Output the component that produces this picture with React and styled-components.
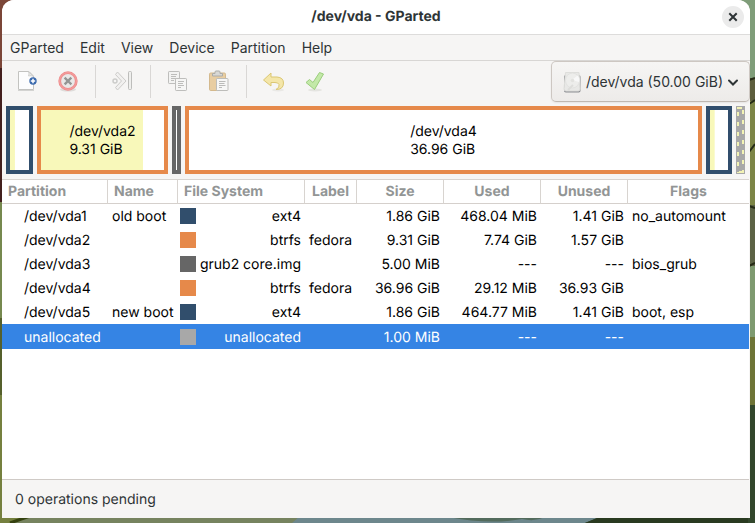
import React from "react";
import styled, { createGlobalStyle } from "styled-components";

const GlobalStyle = createGlobalStyle`
  *, *::before, *::after { box-sizing: border-box; }
  html, body { margin: 0; padding: 0; }
  body {
    font-family: Inter, "Noto Sans", "Liberation Sans", sans-serif;
    font-size: 14px;
    line-height: 18px;
    color: #2e3436;
    text-rendering: geometricPrecision;
  }
  button { font: inherit; color: inherit; }
`;

const Desktop = styled.div`
  position: relative;
  display: flex;
  min-height: 100vh;
  padding: 0 5px 5px 2px;
  overflow: hidden;
`;

const WallpaperSvg = styled.svg`
  position: absolute;
  inset: 0;
  width: 100%;
  height: 100%;
`;

const Window = styled.main`
  position: relative;
  display: flex;
  flex: 1;
  flex-direction: column;
  min-width: 0;
  overflow: hidden;
  background: #f6f5f4;
  border-radius: 12px 12px 0 0;
`;

const TitleBar = styled.header`
  display: grid;
  grid-template-columns: 1fr auto 1fr;
  align-items: center;
  height: 35px;
  padding: 0 6px 1px;
  background: #fff;
  border-bottom: 1px solid #dddcdb;
`;

const Title = styled.h1`
  grid-column: 2;
  margin: 0;
  font-size: 14px;
  font-weight: 700;
  line-height: 18px;
`;

const CloseButton = styled.button`
  display: grid;
  place-items: center;
  justify-self: end;
  width: 22px;
  height: 22px;
  padding: 0;
  border: 0;
  border-radius: 50%;
  background: #ebebeb;
`;

const MenuBar = styled.nav`
  display: flex;
  align-items: center;
  height: 26px;
  border-bottom: 1px solid #d8d6d4;
`;

const MenuButton = styled.button`
  padding: 0 8px;
  border: 0;
  background: none;
  line-height: 24px;
`;

const Toolbar = styled.div`
  display: flex;
  align-items: center;
  height: 41px;
  padding-left: 4px;
`;

const ToolButton = styled.button`
  display: grid;
  place-items: center;
  width: 41px;
  height: 38px;
  padding: 0 0 2px;
  border: 0;
  background: none;
`;

const Separator = styled.span`
  width: 14px;
  height: 33px;
  background: linear-gradient(#d9d7d5, #d9d7d5) center / 1px 100% no-repeat;
`;

const DeviceButton = styled.button`
  display: flex;
  align-items: center;
  gap: 4px;
  height: 41px;
  margin-left: auto;
  padding: 0 10px;
  border: 1px solid #cdc7c2;
  border-bottom-color: #bfb8b1;
  border-radius: 5px;
  background: linear-gradient(#f6f5f4, #edebe9);
  box-shadow: 0 1px 2px rgba(0, 0, 0, 0.07);
  white-space: nowrap;
`;

const DiskMap = styled.section`
  display: flex;
  gap: 4px;
  height: 77px;
  padding: 4px 5px 5px 4px;
`;

const DiskBlock = styled.div`
  display: grid;
  flex: ${(p) => p.$grow} 1 8px;
  place-items: center;
  min-width: 9px;
  border: 4px solid ${(p) => p.$color};
  background: linear-gradient(#f8f8ba, #f8f8ba) left / ${(p) => p.$used} 100% no-repeat #fff;
  color: #000;
  white-space: nowrap;
`;

const BlockText = styled.div`
  padding-top: 2px;
`;

const FreeBlock = styled.div`
  flex: 1 1 8px;
  min-width: 9px;
  padding: 1px;
  background: #a8a8a8;
`;

const FreeOutline = styled.div`
  height: 100%;
  background:
    linear-gradient(#f3f3b5, #f3f3b5) left top / 5px 2px no-repeat,
    linear-gradient(#f3f3b5, #f3f3b5) right bottom / 5px 2px no-repeat,
    repeating-linear-gradient(transparent 0 5px, #f3f3b5 5px 9px, transparent 9px 10px) left / 2px 100% no-repeat,
    repeating-linear-gradient(transparent 0 3px, #f3f3b5 3px 7px, transparent 7px 10px) right / 2px 100% no-repeat;
`;

const TablePane = styled.section`
  flex: 1;
  min-height: 0;
  margin-right: 1px;
  border-top: 1px solid #d8d4d0;
  border-bottom: 1px solid #cfcac6;
  background: #fff;
`;

const Table = styled.table`
  width: 100%;
  table-layout: fixed;
  border-collapse: separate;
  border-spacing: 0;
  color: #000;
`;

const Col = styled.col`
  width: ${(p) => p.$width};
`;

const HeadCell = styled.th`
  height: 24px;
  padding: 0 6px;
  border-bottom: 1px solid #d5d0cc;
  border-right: 1px solid #d8d4d0;
  color: #929595;
  font-weight: 700;
  text-align: ${(p) => p.$align};
  &:last-child { border-right: 0; }
`;

const Row = styled.tr`
  height: 24px;
  ${(p) =>
    p.$selected &&
    `
    height: 25px;
    background: #3584e4;
    color: #fff;
  `}
`;

const Cell = styled.td`
  padding: 2px 4px 0;
  padding-left: ${(p) => (p.$indent ? "22px" : "4px")};
  text-align: ${(p) => p.$align || "left"};
  white-space: nowrap;
`;

const FsCell = styled.td`
  padding: 0 4px 0 2px;
`;

const FsContent = styled.div`
  display: flex;
  align-items: center;
  justify-content: space-between;
  white-space: nowrap;
`;

const FsName = styled.span`
  padding-top: 2px;
`;

const Swatch = styled.span`
  flex: none;
  width: 16px;
  height: 16px;
  background: ${(p) => p.$color};
`;

const StatusBar = styled.footer`
  display: flex;
  align-items: center;
  height: 38px;
  padding: 2px 13px 0;
`;

const NAVY = "#314e6c";
const ORANGE = "#e6894a";
const GREY = "#666666";
const LIGHT = "#a8a8a8";

const menus = ["GParted", "Edit", "View", "Device", "Partition", "Help"];

const blocks = [
  { grow: 19, color: NAVY, used: "26%" },
  { grow: 123, color: ORANGE, used: "83%", name: "/dev/vda2", size: "9.31 GiB" },
  { grow: 1, color: GREY, used: "0%" },
  { grow: 509, color: ORANGE, used: "0%", name: "/dev/vda4", size: "36.96 GiB" },
  { grow: 18, color: NAVY, used: "26%" },
];

const columns = [
  { title: "Partition", width: "106px", align: "left" },
  { title: "Name", width: "70px", align: "left" },
  { title: "File System", width: "127px", align: "left" },
  { title: "Label", width: "52px", align: "center" },
  { title: "Size", width: "87px", align: "center" },
  { title: "Used", width: "97px", align: "center" },
  { title: "Unused", width: "87px", align: "center" },
  { title: "Flags", width: "auto", align: "center" },
];

const rows = [
  { part: "/dev/vda1", name: "old boot", color: NAVY, fs: "ext4", label: "", size: "1.86 GiB", used: "468.04 MiB", unused: "1.41 GiB", flags: "no_automount" },
  { part: "/dev/vda2", name: "", color: ORANGE, fs: "btrfs", label: "fedora", size: "9.31 GiB", used: "7.74 GiB", unused: "1.57 GiB", flags: "" },
  { part: "/dev/vda3", name: "", color: GREY, fs: "grub2 core.img", label: "", size: "5.00 MiB", used: "---", unused: "---", flags: "bios_grub" },
  { part: "/dev/vda4", name: "", color: ORANGE, fs: "btrfs", label: "fedora", size: "36.96 GiB", used: "29.12 MiB", unused: "36.93 GiB", flags: "" },
  { part: "/dev/vda5", name: "new boot", color: NAVY, fs: "ext4", label: "", size: "1.86 GiB", used: "464.77 MiB", unused: "1.41 GiB", flags: "boot, esp" },
  { part: "unallocated", name: "", color: LIGHT, fs: "unallocated", label: "", size: "1.00 MiB", used: "---", unused: "---", flags: "", selected: true },
];

function Wallpaper() {
  return (
    <WallpaperSvg viewBox="0 0 755 523" preserveAspectRatio="none" aria-hidden="true">
      <rect width="755" height="523" fill="#75803f" />
      <path d="M0 0H20V60L0 78Z" fill="#7b4638" />
      <path d="M0 68H4V202H0Z" fill="#43201e" />
      <path d="M0 202H4V318H0Z" fill="#76894f" />
      <path d="M0 318H4V395H0Z" fill="#55602c" />
      <path d="M730 0H755V78H730Z" fill="#7f9d79" />
      <path d="M748 78H755V101H748Z" fill="#5c5d3c" />
      <path d="M748 101H755V205H748Z" fill="#7c8546" />
      <path d="M748 205H755V266H748Z" fill="#5c6345" />
      <path d="M748 266H755V337H748Z" fill="#7e9a70" />
      <path d="M748 337H755V405H748Z" fill="#6e7436" />
      <path d="M749 80L755 78M749 104L755 100M749 152L755 144M749 206L755 208M749 266L755 263" stroke="#252b16" strokeWidth="2" />
      <path d="M748 405H755V523H580L600 514H748Z" fill="#32472c" />
      <path d="M25 516H310L295 523H10Z" fill="#76835f" />
      <path d="M10 523L30 516" stroke="#34410f" strokeWidth="3" />
      <path d="M300 516H602L585 523H292Z" fill="#6d878c" />
      <path d="M448 517H545Q535 522 522 519Q490 525 448 517Z" fill="#536b5c" />
      <path d="M602 516H748V523H585Z" fill="#293a20" />
    </WallpaperSvg>
  );
}

function NewIcon() {
  return (
    <svg width="24" height="24" viewBox="0 0 24 24">
      <path d="M3 21.5H19" stroke="#d3d3d1" strokeWidth="1" />
      <path d="M3.5 2.5H14L18.500 7V20.500H3.500Z" fill="#fdfdfd" stroke="#c3c3c0" />
      <path d="M13.500 2.500Q14.500 5 13.500 7Q16 6 18.500 7.500Z" fill="#e8e8e6" stroke="#c9c9c6" strokeWidth=".8" />
      <circle cx="18" cy="12" r="3.700" fill="#3a69ad" />
      <path d="M15.800 12H20.200M18 9.800V14.200" stroke="#fff" strokeWidth="1.500" />
    </svg>
  );
}

function DeleteIcon() {
  return (
    <svg width="24" height="24" viewBox="0 0 24 24">
      <ellipse cx="12" cy="20.500" rx="8" ry="2" fill="#dedcda" />
      <circle cx="12" cy="12" r="8.300" fill="#e9e8e7" stroke="#ee8d8d" strokeWidth="2.800" />
      <circle cx="12" cy="12" r="8.400" fill="none" stroke="#f5a0a0" strokeWidth="1" />
      <path d="M9.500 9.500L14.500 14.500M14.500 9.500L9.500 14.500" stroke="#939594" strokeWidth="2.400" strokeLinecap="square" />
    </svg>
  );
}

function ResizeIcon() {
  return (
    <svg width="24" height="24" viewBox="0 0 24 24" fill="none">
      <circle cx="4" cy="12" r="2" stroke="#ccccca" strokeWidth="1.500" />
      <path d="M4.500 5.500L6.500 3L15 12L6.500 21L4.500 18.500L10.500 12Z" fill="#f1f0ef" stroke="#cccbc9" strokeLinejoin="round" />
      <rect x="17.500" y="2.500" width="3" height="18" rx="1" fill="#efefed" stroke="#bdbdbb" />
    </svg>
  );
}

function CopyIcon() {
  return (
    <svg width="24" height="24" viewBox="0 0 24 24">
      <rect x="2.500" y="2.500" width="11" height="12" rx=".7" fill="#f3f3f2" stroke="#bebebc" />
      <path d="M5 5.500H11M5 7.500H10M5 9.500H11M5 11.500H8" stroke="#bdbdbb" />
      <rect x="9.500" y="9.500" width="11" height="12" rx=".7" fill="#f6f6f5" stroke="#bebebc" />
      <path d="M12 12.500H18M12 14.500H17M12 16.500H18M12 18.500H15" stroke="#bdbdbb" />
    </svg>
  );
}

function PasteIcon() {
  return (
    <svg width="24" height="24" viewBox="0 0 24 24">
      <rect x="2.500" y="4" width="16" height="17.500" rx="1.200" fill="#e8cda1" stroke="#d4b98d" />
      <path d="M5.500 7V4.500H8V3Q8 2 9 2H12Q13 2 13 3V4.500H15.500V7Z" fill="#d8d8d5" stroke="#acaca8" />
      <rect x="9.500" y="9.500" width="11.500" height="12" rx=".7" fill="#f7f7f6" stroke="#bdbdba" />
      <path d="M12 12.500H18.500M12 14.500H17.500M12 16.500H18.500M12 18.500H15" stroke="#bbbbb9" />
    </svg>
  );
}

function UndoIcon() {
  return (
    <svg width="24" height="24" viewBox="0 0 24 24">
      <ellipse cx="16" cy="21" rx="6" ry="1.500" fill="#e9e8e5" />
      <path d="M1.500 11L9 4V8H15Q21.500 8.500 21.500 14Q21.500 20.500 14 20.500Q18 18.500 17 15.500Q16.300 13.500 13 13.500H9V17Z" fill="#f4e6a9" stroke="#dbc773" strokeLinejoin="round" />
    </svg>
  );
}

function ApplyIcon() {
  return (
    <svg width="24" height="24" viewBox="0 0 24 24">
      <ellipse cx="12" cy="21" rx="7" ry="1.500" fill="#e4e4e0" />
      <path d="M3 13.500L6.500 10.500L10 13.500L16.500 3.500L20.500 5L11.500 20.500Z" fill="#c3e9a8" stroke="#9bcd7c" strokeLinejoin="round" />
    </svg>
  );
}

function DriveIcon() {
  return (
    <svg width="20" height="24" viewBox="0 0 20 24">
      <rect x="2" y="5" width="16.500" height="17.500" rx="1.800" fill="#8b8d91" />
      <path d="M3.500 2.500H17L18 19Q18 21 16.500 21H4Q2 21 2 19Z" fill="#e8e8e6" stroke="#dededb" />
      <ellipse cx="10.500" cy="10.500" rx="7" ry="7.500" fill="#ededeb" stroke="#e2e2e0" />
      <path d="M10 10L15.500 5.500Q18 8 17 12Z" fill="#f8f8f8" />
      <circle cx="10.500" cy="10.500" r="1.800" fill="#e2e2df" />
      <path d="M6 20L11 15" stroke="#dddddb" strokeWidth="2" />
    </svg>
  );
}

export default function App() {
  return (
    <>
      <GlobalStyle />
      <Desktop>
        <Wallpaper />
        <Window>
          <TitleBar>
            <Title>/dev/vda - GParted</Title>
            <CloseButton aria-label="Close">
              <svg width="10" height="10" viewBox="0 0 10 10">
                <path d="M2 2L8 8M8 2L2 8" stroke="#2e3436" strokeWidth="2" strokeLinecap="square" />
              </svg>
            </CloseButton>
          </TitleBar>
          <MenuBar aria-label="Main menu">
            {menus.map((m) => (
              <MenuButton key={m}>{m}</MenuButton>
            ))}
          </MenuBar>
          <Toolbar>
            <ToolButton aria-label="New" disabled><NewIcon /></ToolButton>
            <ToolButton aria-label="Delete" disabled><DeleteIcon /></ToolButton>
            <Separator />
            <ToolButton aria-label="Resize/Move" disabled><ResizeIcon /></ToolButton>
            <Separator />
            <ToolButton aria-label="Copy" disabled><CopyIcon /></ToolButton>
            <ToolButton aria-label="Paste" disabled><PasteIcon /></ToolButton>
            <Separator />
            <ToolButton aria-label="Undo" disabled><UndoIcon /></ToolButton>
            <ToolButton aria-label="Apply" disabled><ApplyIcon /></ToolButton>
            <DeviceButton aria-haspopup="listbox">
              <DriveIcon />
              /dev/vda (50.00 GiB)
              <svg width="12" height="12" viewBox="0 0 12 12" fill="none">
                <path d="M2 4.500L6 8.500L10 4.500" stroke="#2e3436" strokeWidth="2" strokeLinecap="round" />
              </svg>
            </DeviceButton>
          </Toolbar>
          <DiskMap aria-label="Disk layout">
            {blocks.map((b, i) => (
              <DiskBlock key={i} $grow={b.grow} $color={b.color} $used={b.used}>
                {b.name && (
                  <BlockText>
                    {b.name}
                    <br />
                    {b.size}
                  </BlockText>
                )}
              </DiskBlock>
            ))}
            <FreeBlock><FreeOutline /></FreeBlock>
          </DiskMap>
          <TablePane>
            <Table>
              <colgroup>
                {columns.map((c) => (
                  <Col key={c.title} $width={c.width} />
                ))}
              </colgroup>
              <thead>
                <tr>
                  {columns.map((c) => (
                    <HeadCell key={c.title} scope="col" $align={c.align}>{c.title}</HeadCell>
                  ))}
                </tr>
              </thead>
              <tbody>
                {rows.map((r) => (
                  <Row key={r.part} $selected={r.selected} aria-selected={!!r.selected}>
                    <Cell $indent>{r.part}</Cell>
                    <Cell>{r.name}</Cell>
                    <FsCell>
                      <FsContent>
                        <Swatch $color={r.color} />
                        <FsName>{r.fs}</FsName>
                      </FsContent>
                    </FsCell>
                    <Cell>{r.label}</Cell>
                    <Cell $align="right">{r.size}</Cell>
                    <Cell $align="right">{r.used}</Cell>
                    <Cell $align="right">{r.unused}</Cell>
                    <Cell>{r.flags}</Cell>
                  </Row>
                ))}
              </tbody>
            </Table>
          </TablePane>
          <StatusBar>0 operations pending</StatusBar>
        </Window>
      </Desktop>
    </>
  );
}
